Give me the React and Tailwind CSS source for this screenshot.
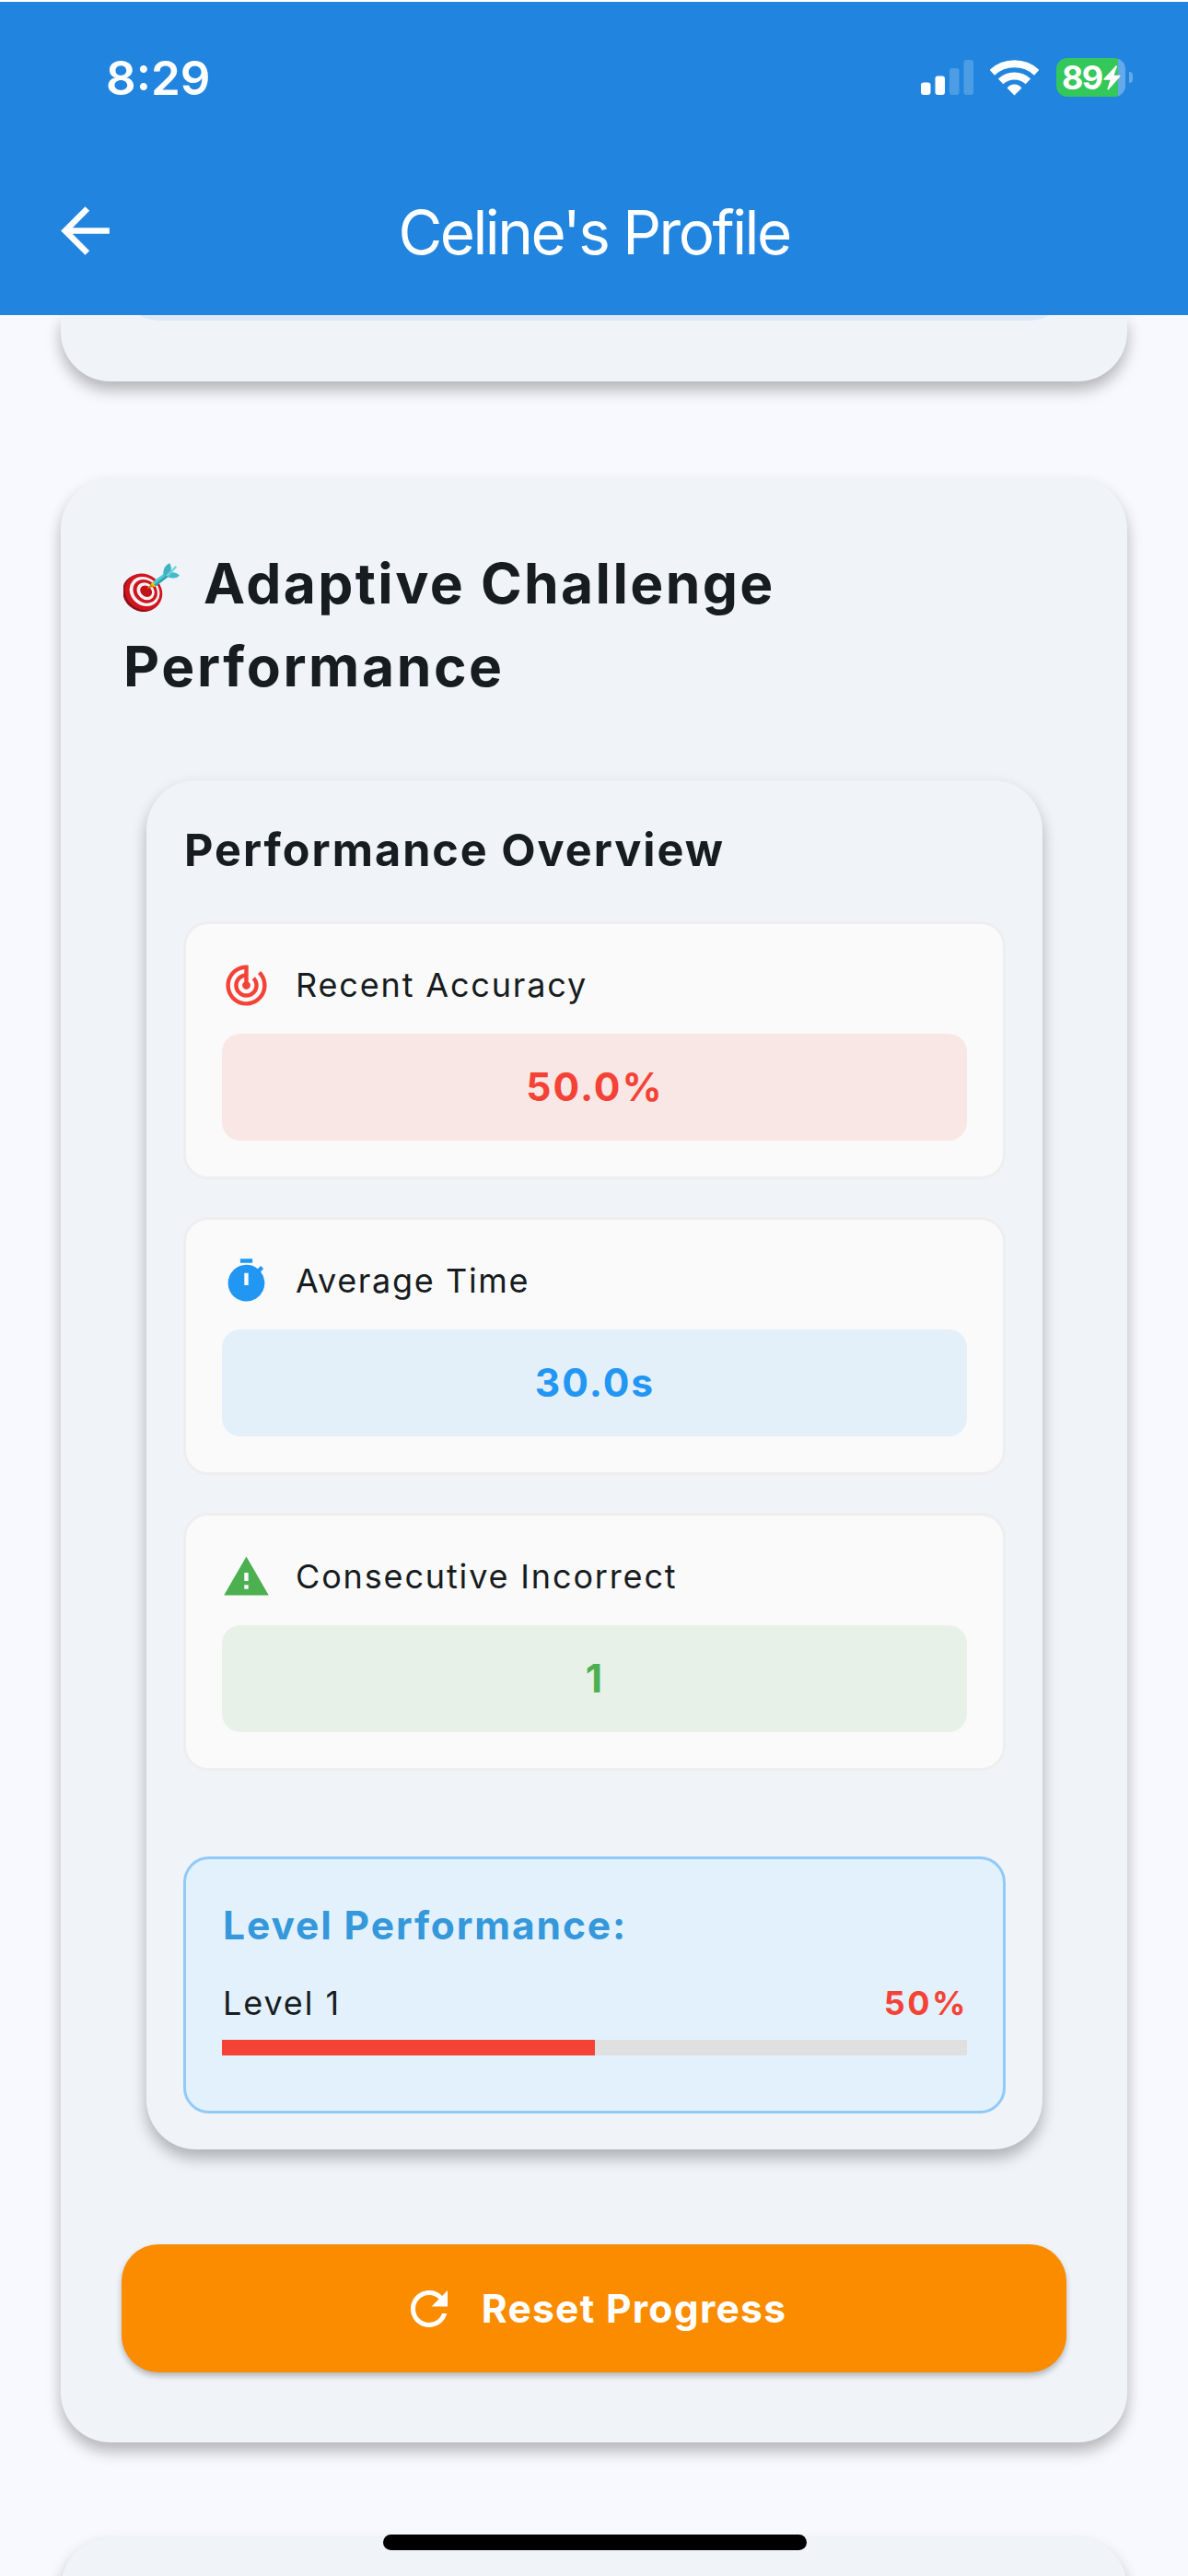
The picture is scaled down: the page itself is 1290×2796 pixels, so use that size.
import {
  MdArrowBack,
  MdRefresh,
  MdTimer,
  MdTrackChanges,
  MdWarning,
} from "react-icons/md";

const METRICS = [
  {
    label: "Recent Accuracy",
    value: "50.0%",
    Icon: MdTrackChanges,
    iconColor: "text-[#f44336]",
    valueBox: "bg-[#f9e7e5] text-[#f44336]",
    labelSpacing: "tracking-[1.84px]",
  },
  {
    label: "Average Time",
    value: "30.0s",
    Icon: MdTimer,
    iconColor: "text-[#2196f3]",
    valueBox: "bg-[#e3eff9] text-[#2196f3]",
    labelSpacing: "tracking-[1.65px]",
  },
  {
    label: "Consecutive Incorrect",
    value: "1",
    Icon: MdWarning,
    iconColor: "text-[#4caf50]",
    valueBox: "bg-[#e8f1e8] text-[#4caf50]",
    labelSpacing: "tracking-[1.85px]",
  },
];

function SignalIcon() {
  return (
    <svg viewBox="0 0 57 38" className="h-[38px] w-[57px]" fill="#fff">
      <rect x="0" y="24.5" width="10.5" height="13.5" rx="3" />
      <rect x="15.5" y="17.5" width="10.5" height="20.5" rx="3" />
      <rect x="31" y="9" width="10.5" height="29" rx="3" opacity="0.2" />
      <rect x="46.5" y="0" width="10.5" height="38" rx="3" opacity="0.2" />
    </svg>
  );
}

function WifiIcon() {
  return (
    <svg viewBox="0 0 160 120" className="h-[40px] w-[53px]" fill="none" stroke="#fff">
      <path d="M7 44A108 108 0 0 1 153 44" strokeWidth="24" />
      <path d="M35 73A66 66 0 0 1 125 73" strokeWidth="24" />
      <path d="M80 119L56 95Q66 83 80 83T104 95Z" fill="#fff" stroke="none" />
    </svg>
  );
}

function Battery() {
  return (
    <div className="flex items-center gap-[4px]">
      <div className="flex h-[42px] w-[75px] items-center rounded-[12px] bg-[linear-gradient(90deg,#34c759_67px,#64a9e9_67px)] pl-[6px]">
        <span className="text-[36px] leading-[42px] font-[650] tracking-[-1.6px]">89</span>
        <svg viewBox="0 0 19 27" className="ml-[1px] h-[27px] w-[19px] shrink-0" fill="#fff">
          <path d="M13.8 0.3L0.6 14.6Q0 15.8 1.2 15.8H7.6L4.4 25.6Q4.6 27 5.8 26.2L18.4 12Q18.8 10.8 17.6 10.8H11.6L15 1.2Q15 -0.2 13.8 0.3Z" />
        </svg>
      </div>
      <div className="h-[12px] w-[4px] rounded-r-full bg-[#64a9e9]" />
    </div>
  );
}

function TargetIcon() {
  return (
    <svg viewBox="0 0 183 157" className="mt-[7px] ml-[2px] h-[53px] w-[61px] shrink-0" role="img" aria-label="🎯">
      <g transform="rotate(40 64 92)">
        <ellipse cx="64" cy="99" rx="65" ry="58" fill="#8e0d14" />
        <ellipse cx="66" cy="92" rx="64" ry="57" fill="#cf1620" />
        <ellipse cx="68" cy="89" rx="52" ry="45" fill="#f7f3f3" />
        <ellipse cx="69" cy="87" rx="42" ry="36" fill="#cf1620" />
        <ellipse cx="70" cy="86" rx="31" ry="26" fill="#f7f3f3" />
        <ellipse cx="71" cy="85" rx="21" ry="17" fill="#c4121b" />
      </g>
      <path d="M77 84L91 66L103 74Z" fill="#c98a12" />
      <path d="M89 68L97 60L108 70L101 78Z" fill="#eec21c" />
      <path d="M96 60L134 33L146 44L106 74Z" fill="#4fc9d3" />
      <path d="M100 70L142 38L146 44L106 75Z" fill="#2d9fae" />
      <path d="M130 38Q128 10 150 0Q160 12 153 32L142 42Z" fill="#3fb3be" />
      <path d="M140 42L155 30Q172 28 183 40Q172 52 150 47Z" fill="#43bcc8" />
      <path d="M138 40L170 8L174 13L146 43Z" fill="#67d6de" />
    </svg>
  );
}

function MetricCard({ metric }) {
  const { Icon } = metric;
  return (
    <div className="flex h-[280px] flex-col rounded-[27px] border-[3px] border-[#eeeeee] bg-[#fafafa] px-[39px] pt-[40px]">
      <div className="flex h-[53px] items-center gap-[27px]">
        <Icon className={`size-[53px] ${metric.iconColor}`} />
        <span className={`-mt-px text-[36px] text-[#171c20] ${metric.labelSpacing}`}>{metric.label}</span>
      </div>
      <div
        className={`mt-[26px] flex h-[116px] items-center justify-center rounded-[20px] text-[42.5px] font-[650] ${metric.valueBox}`}
      >
        <span className="-mr-[1px] tracking-[2px]">{metric.value}</span>
      </div>
    </div>
  );
}

const CARD = "bg-[#f0f3f8] shadow-[0_10px_16px_rgba(0,0,0,0.25),0_2px_20px_rgba(0,0,0,0.03)]";

export default function App() {
  return (
    <div className="relative flex h-[2796px] w-[1290px] flex-col overflow-hidden bg-[#f8f9fe] font-['Inter',sans-serif] leading-none text-[#171c20]">
      <header className="relative z-10 flex h-[342px] shrink-0 flex-col border-t-2 border-white bg-[#2185df] text-white">
        <div className="mt-[52px] flex h-[60px] items-center justify-between pr-[60px] pl-[115px]">
          <span className="text-[51px] font-semibold">8:29</span>
          <div className="flex items-center">
            <SignalIcon />
            <div className="ml-[18px]">
              <WifiIcon />
            </div>
            <div className="ml-[19px]">
              <Battery />
            </div>
          </div>
        </div>
        <div className="mt-[96px] flex h-[80px] items-center pr-[132px] pl-[53px]">
          <MdArrowBack className="size-[79px]" />
          <h1 className="mt-[5px] flex-1 text-center text-[65.5px] font-[380] tracking-[-2.5px]">
            Celine's Profile
          </h1>
        </div>
      </header>

      <main className="flex flex-1 flex-col px-[66px]">
        <div className={`h-[72px] shrink-0 rounded-b-[54px] px-[66px] ${CARD}`}>
          <div className="flex h-[6px] items-end overflow-hidden">
            <div className="h-[90px] w-full shrink-0 rounded-[40px] bg-[#dde9f6]" />
          </div>
        </div>

        <section className={`mt-[106px] h-[2131px] shrink-0 rounded-[54px] px-[66px] pt-[69px] ${CARD}`}>
          <h2 className="text-[60.5px] leading-[89.5px] font-[650] tracking-[2.4px]">
            <span className="flex items-center">
              <TargetIcon />
              <span className="ml-[26px]">Adaptive Challenge</span>
            </span>
            <span className="block pl-[2px] tracking-[2.6px]">Performance</span>
          </h2>

          <div className={`mr-[26px] ml-[27px] mt-[79px] h-[1486px] rounded-[54px] px-[40px] pt-[46px] ${CARD}`}>
            <h3 className="pl-[1px] text-[48.5px] leading-[60px] font-[650] tracking-[2px]">
              Performance Overview
            </h3>
            <div className="mt-[47px] flex flex-col gap-[41px]">
              {METRICS.map((metric) => (
                <MetricCard key={metric.label} metric={metric} />
              ))}
            </div>

            <div className="mt-[93px] h-[279px] rounded-[28px] border-[3px] border-[#90caf9] bg-[#e3f1fd] px-[39px] pt-[45px]">
              <h4 className="pl-px text-[42.5px] leading-[54px] font-[650] tracking-[1.9px] text-[#3498db]">
                Level Performance:
              </h4>
              <div className="mt-[34px] flex h-[46px] items-center justify-between text-[36px]">
                <span className="pl-px tracking-[1.9px]">Level 1</span>
                <span className="-mr-px font-[650] tracking-[2.5px] text-[#f44336]">50%</span>
              </div>
              <div className="mt-[17px] h-[17px] bg-[#e0e0e0]">
                <div className="h-full w-1/2 bg-[#f44336]" />
              </div>
            </div>
          </div>

          <button className="mt-[103px] flex h-[139px] w-full items-center justify-center gap-[27px] rounded-[40px] bg-[#fb8c00] text-[42.5px] font-[650] tracking-[1.3px] text-white shadow-[0_4px_6px_rgba(0,0,0,0.25)]">
            <MdRefresh className="size-[60px]" />
            <span className="pt-px">Reset Progress</span>
          </button>
        </section>

        <div className={`mt-[104px] h-[200px] shrink-0 rounded-[54px] ${CARD}`} />
      </main>

      <div className="absolute bottom-[28px] left-[416px] h-[17px] w-[460px] rounded-full bg-black" />
    </div>
  );
}
